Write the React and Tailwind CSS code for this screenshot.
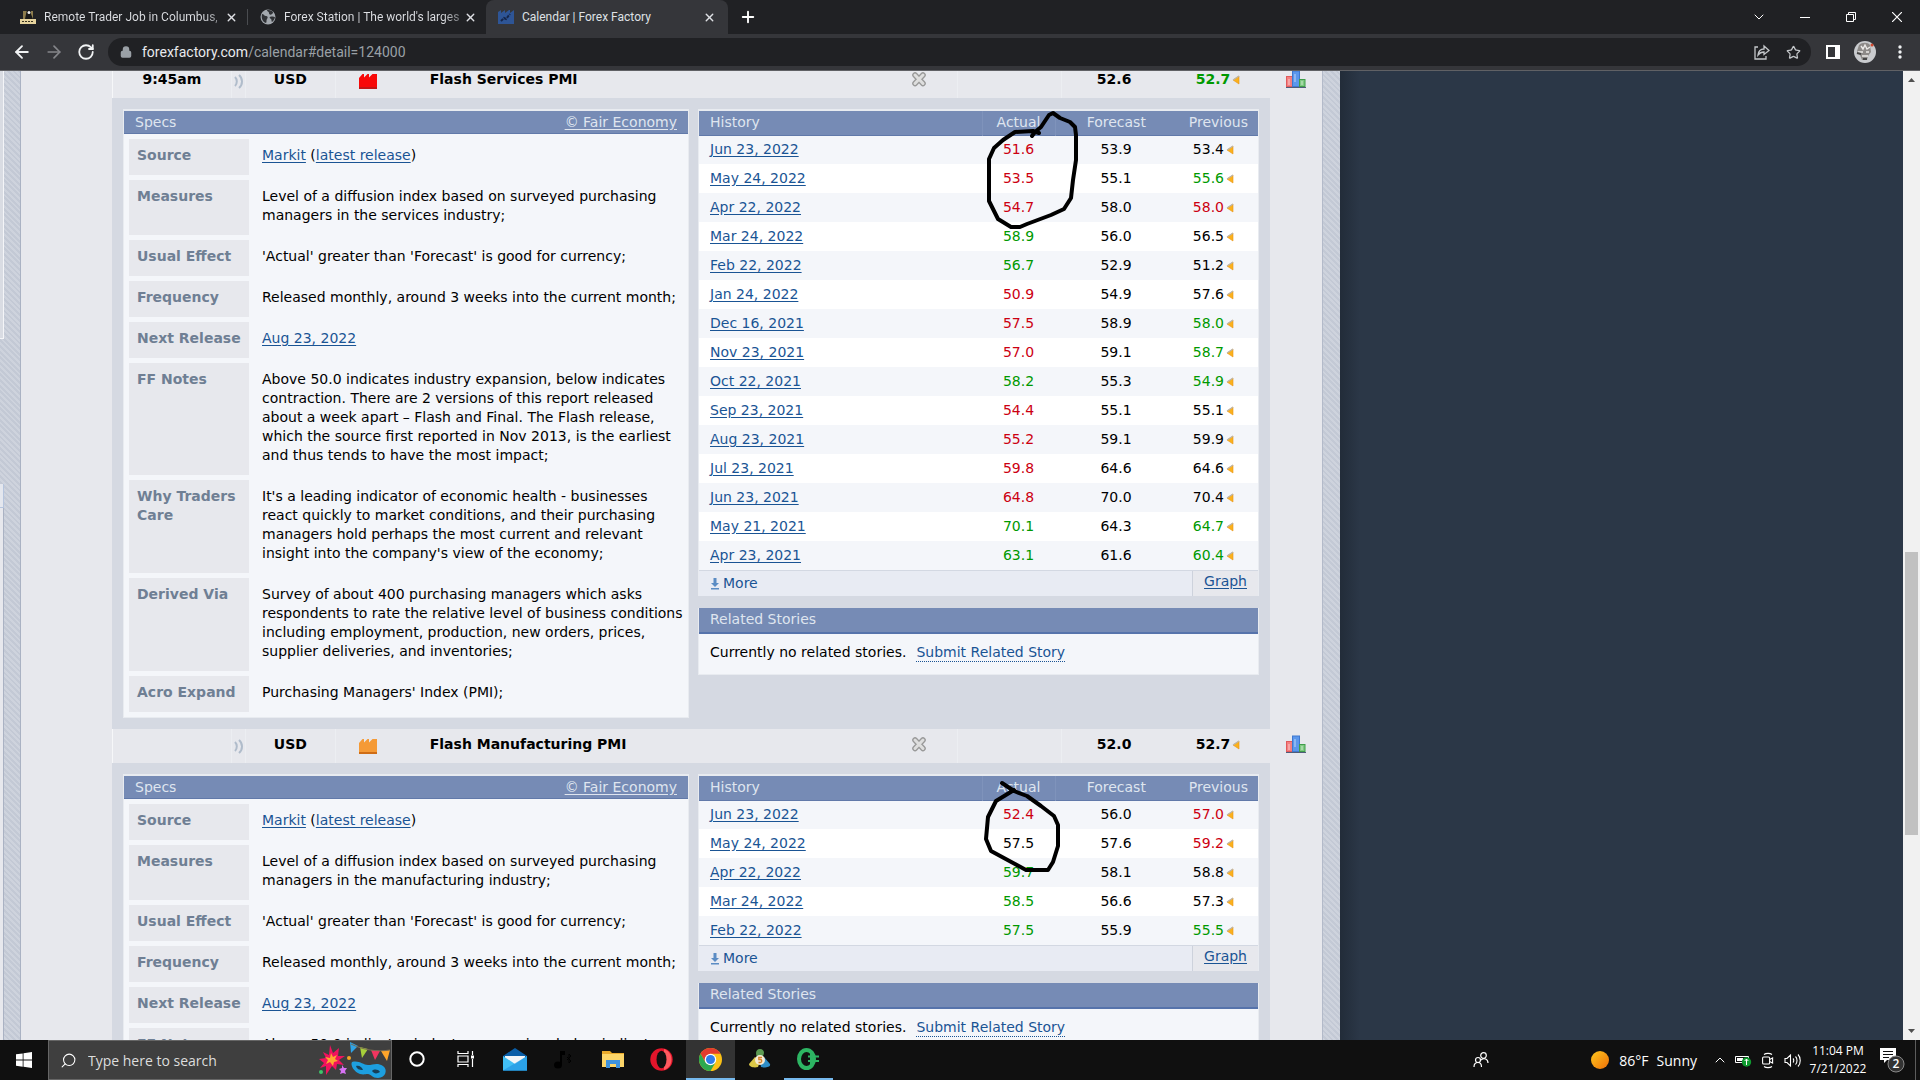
import { X, Plus, ArrowLeft, ArrowRight, RotateCw, Lock, Star, ChevronDown, ChevronUp, Search } from "lucide-react";

const specsFor = (sector) => [
  { label: "Source", source: true },
  { label: "Measures", text: `Level of a diffusion index based on surveyed purchasing managers in the ${sector} industry;` },
  { label: "Usual Effect", text: "'Actual' greater than 'Forecast' is good for currency;" },
  { label: "Frequency", text: "Released monthly, around 3 weeks into the current month;" },
  { label: "Next Release", link: "Aug 23, 2022" },
  {
    label: "FF Notes",
    text: "Above 50.0 indicates industry expansion, below indicates contraction. There are 2 versions of this report released about a week apart – Flash and Final. The Flash release, which the source first reported in Nov 2013, is the earliest and thus tends to have the most impact;",
  },
  {
    label: "Why Traders Care",
    text: "It's a leading indicator of economic health - businesses react quickly to market conditions, and their purchasing managers hold perhaps the most current and relevant insight into the company's view of the economy;",
  },
  {
    label: "Derived Via",
    text: "Survey of about 400 purchasing managers which asks respondents to rate the relative level of business conditions including employment, production, new orders, prices, supplier deliveries, and inventories;",
  },
  { label: "Acro Expand", text: "Purchasing Managers' Index (PMI);" },
];

// date, actual, actual tone, forecast, previous, previous tone
const servicesHistory = [
  ["Jun 23, 2022", "51.6", "red", "53.9", "53.4", ""],
  ["May 24, 2022", "53.5", "red", "55.1", "55.6", "green"],
  ["Apr 22, 2022", "54.7", "red", "58.0", "58.0", "red"],
  ["Mar 24, 2022", "58.9", "green", "56.0", "56.5", ""],
  ["Feb 22, 2022", "56.7", "green", "52.9", "51.2", ""],
  ["Jan 24, 2022", "50.9", "red", "54.9", "57.6", ""],
  ["Dec 16, 2021", "57.5", "red", "58.9", "58.0", "green"],
  ["Nov 23, 2021", "57.0", "red", "59.1", "58.7", "green"],
  ["Oct 22, 2021", "58.2", "green", "55.3", "54.9", "green"],
  ["Sep 23, 2021", "54.4", "red", "55.1", "55.1", ""],
  ["Aug 23, 2021", "55.2", "red", "59.1", "59.9", ""],
  ["Jul 23, 2021", "59.8", "red", "64.6", "64.6", ""],
  ["Jun 23, 2021", "64.8", "red", "70.0", "70.4", ""],
  ["May 21, 2021", "70.1", "green", "64.3", "64.7", "green"],
  ["Apr 23, 2021", "63.1", "green", "61.6", "60.4", "green"],
];

const manufacturingHistory = [
  ["Jun 23, 2022", "52.4", "red", "56.0", "57.0", "red"],
  ["May 24, 2022", "57.5", "", "57.6", "59.2", "red"],
  ["Apr 22, 2022", "59.7", "green", "58.1", "58.8", ""],
  ["Mar 24, 2022", "58.5", "green", "56.6", "57.3", ""],
  ["Feb 22, 2022", "57.5", "green", "55.9", "55.5", "green"],
];

const tones = {
  red: "text-[#cc0011]",
  green: "text-[#009900]",
  "": "text-black",
};

const stripes = "bg-[repeating-linear-gradient(45deg,#c3c9d5_0px,#c3c9d5_2px,#ced3dd_2px,#ced3dd_4px)]";
const link = "text-[#1a5494] underline underline-offset-2";

/* ---------- small icons ---------- */

function RevisedIcon() {
  return (
    <svg width="8" height="10" viewBox="0 0 8 10" className="ml-[2px] inline-block align-[-1px]">
      <path d="M7 1v8L1 5z" fill="#fbb11c" stroke="#e8941a" strokeWidth="0.6" />
      <path d="M1 5l6-4" stroke="#bcb6ad" strokeWidth="1.2" />
    </svg>
  );
}

function SoundIcon() {
  return (
    <svg width="11" height="15" viewBox="0 0 11 15" fill="none" stroke="#b0bccb" strokeWidth="2">
      <path d="M2 3c2.400 2.500 2.400 6.500 0 9M6 1c4 3.500 4 9.500 0 13" />
    </svg>
  );
}

function ImpactIcon({ color, edge }) {
  return (
    <svg width="18" height="16" viewBox="0 0 18 16">
      <path d="M0 15V5l3.500-4H5v3.500L8.500 1H10v3.500L13.500 1H18v14z" fill={color} />
      <path d="M0 14h18v2H0z" fill={edge} />
    </svg>
  );
}

function DetailCloseIcon() {
  return (
    <svg width="16" height="16" viewBox="0 0 16 16" strokeLinecap="round">
      <path d="M4 4l8 8.500M12 4l-8 8.500" stroke="#999" strokeWidth="5.600" />
      <path d="M4 4l8 8.500M12 4l-8 8.500" stroke="#dedede" strokeWidth="3" />
    </svg>
  );
}

function BarsIcon() {
  return (
    <svg width="20" height="18" viewBox="0 0 20 18">
      <rect x="0.500" y="6.500" width="6" height="10" fill="#f47f80" stroke="#e05a5c" />
      <rect x="6.500" y="1" width="7" height="15.500" fill="#5b97ec" stroke="#3f78cf" />
      <rect x="13.500" y="9.500" width="5.500" height="7" fill="#7fc982" stroke="#3f9d4a" />
      <path d="M3 9v6M9 4v8M16 11v4" stroke="#fff" strokeOpacity=".3" strokeWidth="2" />
      <path d="M0 17.500h20" stroke="#4f5c7a" />
    </svg>
  );
}

function MoreIcon() {
  return (
    <svg width="10" height="12" viewBox="0 0 10 12" fill="#5b8cc4">
      <path d="M3.500 0h3v5H9L5 9 1 5h2.500zM1 10h8v1.500H1z" />
    </svg>
  );
}

/* ---------- browser chrome ---------- */

function TabStrip() {
  return (
    <div className="flex h-[34px] shrink-0 items-center bg-[#202124] text-[12px] text-[#dfe1e5]">
      <div className="flex h-4 w-[248px] items-center border-r border-[#4a4c50] pl-5 pr-[9px]">
        <svg width="16" height="16" viewBox="0 0 16 16" className="mr-2 shrink-0">
          <path d="M3 2h10v8H3z" fill="#8d7c4c" />
          <path d="M7 1h4v4l2 5H5l1-5z" fill="#191919" />
          <circle cx="9" cy="3.500" r="1.500" fill="#eee" />
          <path d="M0 10h16v5H0z" fill="#e6d39d" />
          <path d="M2 12.500h12" stroke="#3b3420" strokeDasharray="2 1" />
        </svg>
        <span className="flex-1 whitespace-nowrap bg-[linear-gradient(90deg,#dfe1e5_90%,#707276)] bg-clip-text text-transparent">
          Remote Trader Job in Columbus,
        </span>
        <button aria-label="Close tab" className="ml-1"><X size={13} strokeWidth={2.500} /></button>
      </div>
      <div className="flex h-4 w-[238px] items-center pl-3 pr-[9px]">
        <svg width="16" height="16" viewBox="0 0 16 16" className="mr-2 shrink-0">
          <circle cx="8" cy="8" r="7.500" fill="#a3a8ae" />
          <path d="M2 5c2 0 2 2 4 2s2 2 1 3 0 3-1 4C3 13 1 10 2 5zM7 1c0 2 2 1 2 3s2 2 3 1 1-1 1-2c-2-2-4-2-6-2zM10 8c2-1 4 0 5 0-.5 3-2 4-3 5-1-1 0-2-1-3s-2-1-1-2z" fill="#303236" />
        </svg>
        <span className="flex-1 whitespace-nowrap bg-[linear-gradient(90deg,#dfe1e5_90%,#707276)] bg-clip-text text-transparent">
          Forex Station | The world's larges
        </span>
        <button aria-label="Close tab" className="ml-1"><X size={13} strokeWidth={2.500} /></button>
      </div>
      <div className="flex h-full w-[242px] items-center rounded-t-lg bg-[#35363a] pl-3 pr-3">
        <svg width="16" height="16" viewBox="0 0 16 16" className="mr-2 shrink-0">
          <path d="M0 15V3l3-2v3l4-3v3l4-3h1v3l4-3v14z" fill="#2e5596" />
          <path d="M3 12l3-3 2 1 4-5" stroke="#15264a" strokeWidth="2" fill="none" strokeDasharray="3 1" />
        </svg>
        <span className="flex-1 whitespace-nowrap">Calendar | Forex Factory</span>
        <button aria-label="Close tab"><X size={13} strokeWidth={2.500} /></button>
      </div>
      <button aria-label="New tab" className="ml-[11px] text-white"><Plus size={18} strokeWidth={2.500} /></button>
      <div className="ml-auto flex h-7 items-center text-white">
        <button aria-label="Search tabs" className="flex w-[46px] justify-center"><ChevronDown size={16} strokeWidth={1.500} /></button>
        <button aria-label="Minimize" className="flex w-[46px] justify-center">
          <svg width="10" height="10" viewBox="0 0 10 10"><path d="M0 5.500h10" stroke="#fff" /></svg>
        </button>
        <button aria-label="Restore" className="flex w-[46px] justify-center">
          <svg width="10" height="10" viewBox="0 0 10 10" fill="none" stroke="#fff"><path d="M.5 2.500h7v7h-7zM2.500 2.500v-2h7v7h-2" /></svg>
        </button>
        <button aria-label="Close window" className="flex w-[46px] justify-center">
          <svg width="10" height="10" viewBox="0 0 10 10" stroke="#fff" strokeWidth="1.200"><path d="M0 0l10 10M10 0L0 10" /></svg>
        </button>
      </div>
    </div>
  );
}

function Toolbar() {
  return (
    <div className="flex h-[37px] shrink-0 items-center border-b border-[#606165] bg-[#35363a] pl-3 pr-[10px] text-[#f1f3f4]">
      <button aria-label="Back"><ArrowLeft size={20} strokeWidth={2.200} /></button>
      <button aria-label="Forward" className="ml-3 text-[#85868a]"><ArrowRight size={20} strokeWidth={2} /></button>
      <button aria-label="Reload" className="ml-[13px]"><RotateCw size={18} strokeWidth={2.400} /></button>
      <div className="ml-[13px] flex h-7 flex-1 items-center rounded-full bg-[#202124] pl-3 pr-[10px] text-[14px]">
        <Lock size={12} strokeWidth={3} className="mr-[10px] shrink-0 text-[#9aa0a6]" fill="#9aa0a6" />
        <a href="#detail=124000" className="flex-1 text-[#9aa0a6]">
          <span className="text-[#e8eaed]">forexfactory.com</span>/calendar#detail=124000
        </a>
        <button aria-label="Share" className="mr-4">
          <svg width="16" height="16" viewBox="0 0 16 16" fill="none" stroke="#c4c7ca" strokeWidth="1.300">
            <path d="M4 3H1v12h11v-3" />
            <path d="M4 11c.5-4 3-6 6-6V2l5 4.500-5 4V8c-3 0-4.500 1-6 3z" />
          </svg>
        </button>
        <button aria-label="Bookmark"><Star size={15} strokeWidth={2} className="text-[#c4c7ca]" /></button>
      </div>
      <button aria-label="Side panel" className="ml-[15px]">
        <svg width="14" height="14" viewBox="0 0 14 14"><path d="M1 1h12v12H1z" fill="none" stroke="#fff" strokeWidth="2" /><path d="M9 1h4v12H9z" fill="#fff" /></svg>
      </button>
      <button aria-label="Profile" className="ml-[14px]">
        <svg width="22" height="22" viewBox="0 0 22 22">
          <circle cx="11" cy="11" r="11" fill="#c9cbce" />
          <path d="M5 4c3-3 9-3 11 0l1 7-3 4-1 4H8l-2-5-3-4z" fill="#8d8a88" />
          <path d="M7 5l2 3 2-4 2 4 3-2M4 11h5M12 11h3M8 15h6" stroke="#eceae8" strokeWidth="1.400" fill="none" />
          <path d="M3 12l4 1M9 18h4" stroke="#444" strokeWidth="2" />
          <circle cx="18" cy="4" r="1.500" fill="#d2482e" />
        </svg>
      </button>
      <button aria-label="Menu" className="ml-[14px] flex w-5 justify-center">
        <svg width="4" height="14" viewBox="0 0 4 14" fill="#f1f3f4"><circle cx="2" cy="2" r="1.700" /><circle cx="2" cy="7" r="1.700" /><circle cx="2" cy="12" r="1.700" /></svg>
      </button>
    </div>
  );
}

/* ---------- calendar ---------- */

function EventRow({ time, name, color, edge, forecast, previous, previousTone }) {
  return (
    <div className="flex h-[34px] bg-[#e7e8ed] font-bold leading-[31px]">
      <div className="grid flex-1 grid-cols-[118fr_15fr_90fr_64fr_481fr_78fr_104fr_104fr_104fr] border-l border-[#f6f7f9] text-center">
        <div>{time}</div>
        <div className="flex items-center justify-center border-x border-[#eceef2]"><SoundIcon /></div>
        <div className="border-r border-[#eceef2]">USD</div>
        <div className="flex items-center justify-center"><ImpactIcon color={color} edge={edge} /></div>
        <div className="pl-[30px] text-left">{name}</div>
        <div className="flex justify-center border-r border-[#eceef2] pt-[7px]">
          <button aria-label="Close detail" className="h-4"><DetailCloseIcon /></button>
        </div>
        <div className="border-r border-[#eceef2]" />
        <div>{forecast}</div>
        <div className={tones[previousTone]}>
          {previous}
          <RevisedIcon />
        </div>
      </div>
      <div className="flex w-[52px] justify-center pt-[6px]">
        <button aria-label="Graph" className="h-[18px]"><BarsIcon /></button>
      </div>
    </div>
  );
}

function Specs({ sector }) {
  return (
    <section className="border border-t-2 border-[#e8ebf0] bg-[#f4f6fa]">
      <div className="flex h-[23px] items-center justify-between border-b border-[#6179a9] bg-[#768bb5] px-[11px] text-[#dfe5ef]">
        <h3>Specs</h3>
        <a href="#fair-economy" className="underline underline-offset-2">© Fair Economy</a>
      </div>
      <table className="w-full border-separate border-spacing-x-[5px] border-spacing-y-[5px] text-left align-top">
        <tbody>
          {specsFor(sector).map((row) => (
            <tr key={row.label} className="align-top leading-[19px]">
              <th className="w-[120px] bg-[#e7e8ed] pb-[10px] pl-2 pt-[7px] text-[#6f7f94]">{row.label}</th>
              <td className="pb-[10px] pl-2 pt-[7px]">
                {row.source && (
                  <>
                    <a href="#markit" className={link}>Markit</a> (<a href="#latest" className={link}>latest release</a>)
                  </>
                )}
                {row.link && <a href="#next" className={link}>{row.link}</a>}
                {row.text}
              </td>
            </tr>
          ))}
        </tbody>
      </table>
    </section>
  );
}

function History({ rows }) {
  return (
    <section className="border-x border-t-2 border-[#e8ebf0] bg-[#f4f6fa]">
      <table className="w-full table-fixed">
        <thead>
          <tr className="h-6 border-b border-[#6179a9] bg-[#768bb5] text-[#dfe5ef]">
            <th className="pl-[11px] text-left font-normal">History</th>
            <th className="w-[73px] border-x border-[#7f93bb] font-normal">Actual</th>
            <th className="w-[122px] font-normal">Forecast</th>
            <th className="w-[81px] pr-[10px] text-right font-normal">Previous</th>
          </tr>
        </thead>
        <tbody>
          {rows.map(([date, actual, actualTone, forecast, previous, previousTone]) => (
            <tr key={date} className="h-[29px] odd:bg-[#f4f6fa] even:bg-white">
              <td className="pl-[11px]"><a href="#history" className={link}>{date}</a></td>
              <td className={`text-center ${tones[actualTone]}`}>{actual}</td>
              <td className="text-center">{forecast}</td>
              <td className={`whitespace-nowrap pr-6 text-right ${tones[previousTone]}`}>
                {previous}
                <RevisedIcon />
              </td>
            </tr>
          ))}
        </tbody>
      </table>
      <div className="flex h-[26px] items-stretch justify-between border-t border-[#d3d8e2] bg-[#e8ebf3] text-[#1a5494]">
        <button className="flex items-center gap-[3px] pl-[11px]">
          <MoreIcon />
          More
        </button>
        <a href="#graph" className="border-l border-[#cdd2dc] bg-[#e7e8ed] px-[11px] pt-[1px] underline underline-offset-2">Graph</a>
      </div>
    </section>
  );
}

function RelatedStories() {
  return (
    <section className="mt-3 border-x border-b border-[#e8ebf0] bg-[#f4f6fa]">
      <h3 className="h-[26px] border-b-2 border-[#5673ab] bg-[#768bb5] pl-[11px] leading-[22px] text-[#dfe5ef]">Related Stories</h3>
      <p className="flex h-10 gap-[10px] pl-[11px] pt-[9px]">
        <span>Currently no related stories.</span>
        <a href="#submit" className="h-[19px] border-b border-dotted border-[#1a5494] text-[#1a5494]">Submit Related Story</a>
      </p>
    </section>
  );
}

function EventDetail({ sector, rows, children }) {
  return (
    <div className="mr-[52px] grid grid-cols-[566fr_561fr] items-start gap-x-[9px] bg-[#d5d9e2] px-[11px] pb-[11px] pt-[11px]">
      <Specs sector={sector} />
      <div className="relative">
        <History rows={rows} />
        <RelatedStories />
        {children}
      </div>
    </div>
  );
}

// freehand pen marks, drawn over the history tables
function PenMark({ d }) {
  return (
    <svg width="110" height="125" viewBox="0 0 110 125" className="pointer-events-none absolute right-[175px] top-0 overflow-visible" fill="none" stroke="#000" strokeWidth="4" strokeLinecap="round" strokeLinejoin="round">
      <path d={d} />
    </svg>
  );
}

function Calendar() {
  return (
    <div className="-mt-[7px] flex-1 pl-[91px]">
      <EventRow time="9:45am" name="Flash Services PMI" color="#f80808" edge="#c31515" forecast="52.6" previous="52.7" previousTone="green" />
      <EventDetail sector="services" rows={servicesHistory}>
        <PenMark d="M58 27l3-4 6-5 8-12 4-2 7 5 10 4 5 5 1 8v25l-3 20-2 18-7 11-13 6-24 9-7 3h-9l-13-8-9-18V50l5-11 9-8 12-8 18-1 6 2" />
      </EventDetail>
      <EventRow name="Flash Manufacturing PMI" color="#f59a36" edge="#cf6d16" forecast="52.0" previous="52.7" previousTone="" />
      <EventDetail sector="manufacturing" rows={manufacturingHistory}>
        <PenMark d="M28 9l12 8 13 5 14 10 13 10 4 9v21l-5 16-5 8H52l-11-6-24-13-5-12 2-22 8-16 18-11" />
      </EventDetail>
    </div>
  );
}

function Page() {
  return (
    <main className="flex min-h-0 flex-1 overflow-hidden bg-[#2b3747] text-[14px] leading-[19px] text-black [font-family:Verdana,'DejaVu_Sans',sans-serif]">
      <div className="grid flex-1 grid-cols-[1340fr_563fr] overflow-hidden">
        <div className="flex">
          <div className={`flex w-[21px] shrink-0 flex-col border-r border-[#aab2c3] ${stripes}`}>
            <div className="h-[268px] w-1 border-b border-r border-[#f4f5f8] bg-[#d9dce3]" />
            <div className="mt-[145px] h-6 w-1 border-b border-r border-[#b5c4dd] bg-[#e4e7ee]" />
            <div className="w-1 flex-1 border-r border-[#aab2c3] bg-[#e7e8ed]" />
          </div>
          <div className="flex flex-1 bg-[#e7e8ed]">
            <Calendar />
          </div>
          <div className={`w-[18px] shrink-0 border-l border-[#b3bac9] ${stripes}`} />
        </div>
        <div className="bg-[linear-gradient(90deg,#222c39_0px,#2b3747_20px)]" />
      </div>
      <div className="flex w-[17px] shrink-0 flex-col bg-[#f1f1f1]">
        <svg width="17" height="17" viewBox="0 0 17 17"><path d="M5 11h7L8.500 7z" fill="#505050" /></svg>
        <div className="flex-[464]" />
        <div className="mx-[2px] flex-[283] bg-[#c1c1c1]" />
        <div className="flex-[188]" />
        <svg width="17" height="17" viewBox="0 0 17 17"><path d="M5 6h7l-3.500 4z" fill="#505050" /></svg>
      </div>
    </main>
  );
}

/* ---------- taskbar ---------- */

function TaskButton({ label, active, running, children }) {
  return (
    <button
      aria-label={label}
      className={`flex h-full w-[49px] items-center justify-center border-b-2 ${active ? "bg-[#333333]" : ""} ${active || running ? "border-[#76b9ed]" : "border-transparent"}`}
    >
      {children}
    </button>
  );
}

function PartyArt() {
  return (
    <svg width="73" height="38" viewBox="0 0 73 38" className="shrink-0">
      <path d="M12 4l3 8 6-5-1 8 7 0-6 4 5 5-7-1-1 6-4-4-6 9 0-9-6 2 4-5-5-4 7-1-3-6 6 3z" fill="#f0125e" />
      <path d="M13 12l2 4 4-2-2 4 3 2-4 1-1 4-3-4-4 2 2-4-3-3 5 1z" fill="#ffa630" />
      <path d="M32 1l8 4-7 7z" fill="#2fa4e7" />
      <path d="M42 6l8 2-6 9z" fill="#a7cf3a" />
      <path d="M53 9l9 1-5 9z" fill="#f2355f" />
      <path d="M63 10l9-1-3 11z" fill="#ffa52a" />
      <path d="M33 3c12 6 26 8 39 6" stroke="#7a6c53" fill="none" />
      <circle cx="31" cy="17" r="2" fill="#f5a623" />
      <circle cx="3" cy="31" r="2" fill="#3fc56b" />
      <path d="M24 24l2 3 3 0-2 3 1 3-3-1-3 1 1-3-2-2 3-1z" fill="#d873f5" />
      <path d="M34 21c7-2 11 3 16 3s9-3 15 1c5 3 3 12-5 12-6 0-7-4-10-4s-4 1-8 0c-6-2-10-9-8-12z" fill="#1d9fdf" />
      <path d="M38 25c3-1 6 1 7 4-4 0-6-1-7-4zM54 30c2-2 6-2 8 1-3 2-6 2-8-1z" fill="#173f57" />
    </svg>
  );
}

function Taskbar() {
  return (
    <footer className="flex h-10 shrink-0 items-center bg-[#101010] text-white">
      <button aria-label="Start" className="flex h-full w-12 items-center justify-center">
        <svg width="16" height="16" viewBox="0 0 16 16" fill="#fff"><path d="M0 2.300L6.700 1.400v6.200H0zM7.500 1.300L16 0v7.600H7.500zM0 8.400h6.700v6.300L0 13.700zM7.500 8.400H16V16l-8.500-1.200z" /></svg>
      </button>
      <div className="flex h-full w-[344px] items-center border border-[#666] bg-[#3f3f3f] pl-[11px]">
        <Search size={17} strokeWidth={1.500} className="shrink-0 -scale-x-100" />
        <input aria-label="Search" placeholder="Type here to search" className="ml-[11px] min-w-0 flex-1 bg-transparent text-[14px] outline-none placeholder:text-[#dddddd]" />
        <PartyArt />
      </div>
      <TaskButton label="Cortana">
        <svg width="16" height="16" viewBox="0 0 16 16"><circle cx="8" cy="8" r="6.700" fill="none" stroke="#fff" strokeWidth="2" /></svg>
      </TaskButton>
      <TaskButton label="Task View">
        <svg width="18" height="16" viewBox="0 0 18 16" fill="none" stroke="#fff" strokeWidth="1.200"><path d="M1 0v2.500h10V0M1 16v-2.500h10V16M1 5h10v6H1zM15.500 0v4M15.500 8v8" /><path d="M14 4.500h3v3h-3z" fill="#fff" stroke="none" /></svg>
      </TaskButton>
      <TaskButton label="Mail">
        <svg width="24" height="23" viewBox="0 0 24 23"><path d="M0 8l12-8 12 8v14.500H0z" fill="#0a5ea8" /><path d="M2 8h20v8H2z" fill="#f2f5f8" /><path d="M0 8l12 8 12-8v14.500H0z" fill="#41bff5" /><path d="M0 22.500L24 8v14.500z" fill="#1c8fe0" fillOpacity=".6" /></svg>
      </TaskButton>
      <TaskButton label="Music">
        <svg width="19" height="19" viewBox="0 0 19 19"><ellipse cx="4" cy="15" rx="4" ry="3.500" /><path d="M6 1h5v4H8v10H6z" /><path d="M13 7l4 4-2 2V4l2 2-4 4" stroke="#000" fill="none" /></svg>
      </TaskButton>
      <TaskButton label="File Explorer">
        <svg width="22" height="19" viewBox="0 0 22 19"><path d="M0 1h8l2 2h12v5H0z" fill="#e9a92b" /><path d="M0 4h22v13H0z" fill="#fcd569" /><path d="M4 10h14v8h-4v-4H8v4H4z" fill="#3f92dc" /></svg>
      </TaskButton>
      <TaskButton label="Opera">
        <svg width="23" height="23" viewBox="0 0 23 23"><circle cx="11.500" cy="11.500" r="11.200" fill="#e3152b" /><path d="M14 1c10 3 10 18 0 21z" fill="#ff5a5f" /><ellipse cx="11.500" cy="11.500" rx="5" ry="8.700" fill="#101010" /></svg>
      </TaskButton>
      <TaskButton label="Chrome" active>
        <svg width="23" height="23" viewBox="0 0 24 24"><circle cx="12" cy="12" r="12" fill="#fbc116" /><path d="M12 6h10.400a12 12 0 0 0-20.800 0l5.200 9z" fill="#e33b2e" /><path d="M1.600 6a12 12 0 0 0 10.400 18l5.200-9L12 12 6.800 15z" fill="#2da94f" /><circle cx="12" cy="12" r="6" fill="#fff" /><circle cx="12" cy="12" r="4.700" fill="#2f7de9" /></svg>
      </TaskButton>
      <TaskButton label="MetaTrader">
        <svg width="22" height="20" viewBox="0 0 22 20"><path d="M11 0c4 0 5 4 3 7l-6 1C6 4 7 0 11 0z" fill="#5c9a52" /><path d="M6 8L0 15c0 3 5 4 9 3l2-6z" fill="#dcc847" /><path d="M15 8l6 7c1 3-5 4-9 3l-1-6z" fill="#2f8dc6" /><circle cx="11" cy="11" r="5" fill="#f4ead5" /><path d="M13 8.500H9.800v2h1.500c2 0 2 3 0 3H9.500" stroke="#d98228" strokeWidth="1.300" fill="none" /></svg>
      </TaskButton>
      <TaskButton label="Trading terminal" running>
        <svg width="23" height="22" viewBox="0 0 23 22"><ellipse cx="9.500" cy="11" rx="7.500" ry="9" fill="none" stroke="#2db563" strokeWidth="4" /><path d="M11 8.500h11M11 13h11M14 4v13" stroke="#2db563" strokeWidth="2" /></svg>
      </TaskButton>

      <div className="ml-auto flex h-full items-center">
        <button aria-label="People" className="mr-[102px]">
          <svg width="16" height="16" viewBox="0 0 16 16" fill="none" stroke="#fff" strokeWidth="1.200"><circle cx="10.500" cy="3.500" r="2.800" /><circle cx="5" cy="8" r="2.500" /><path d="M1 15c0-3 1.500-4.500 4-4.500S8.500 12 8.500 15M8 8c3-2.500 7-1 7 3" /></svg>
        </button>
        <button className="flex items-center text-[14px]">
          <svg width="18" height="18" viewBox="0 0 18 18">
            <defs><linearGradient id="sun" x1="0" y1="0" x2="1" y2="1"><stop offset="0" stopColor="#ffc81e" /><stop offset="1" stopColor="#ee6f08" /></linearGradient></defs>
            <circle cx="9" cy="9" r="9" fill="url(#sun)" />
          </svg>
          <span className="ml-[10px] mr-2">86°F</span>
          <span>Sunny</span>
        </button>
        <button aria-label="Show hidden icons" className="ml-[15px]"><ChevronUp size={16} strokeWidth={1.500} /></button>
        <button aria-label="Battery" className="ml-[7px]">
          <svg width="17" height="14" viewBox="0 0 17 14"><path d="M.5 3.500h13v6H.5z" fill="none" stroke="#fff" /><path d="M2 5h6v3H2z" fill="#fff" /><circle cx="11.500" cy="9" r="4.700" fill="#0f9b2f" /><path d="M11.500 6v6M9.700 8l1.800-2 1.800 2" stroke="#fff" fill="none" /></svg>
        </button>
        <button aria-label="Meet Now" className="ml-[10px]">
          <svg width="12" height="17" viewBox="0 0 12 17" fill="none" stroke="#fff" strokeWidth="1.100"><rect x="0.600" y="5" width="7" height="7" rx="1" /><path d="M7.600 7.500l3-1.500v5l-3-1.500M2 2.500c2-1.500 6-1.500 8 0M2 14.500c2 1.500 6 1.500 8 0" /></svg>
        </button>
        <button aria-label="Volume" className="ml-[10px]">
          <svg width="17" height="15" viewBox="0 0 17 15" fill="none" stroke="#fff" strokeWidth="1.100"><path d="M1 5.500h2L6.500 2v11L3 9.500H1zM9 5.500c1 1 1 3 0 4M11.500 3.500c2 2 2 6 0 8M14 1.500c3 3 3 9 0 12" /></svg>
        </button>
        <button className="ml-2 w-[58px] whitespace-nowrap text-center text-[12px] leading-[18px]">
          11:04 PM
          <br />
          7/21/2022
        </button>
        <button aria-label="Notifications" className="ml-3 mr-[10px]">
          <svg width="26" height="26" viewBox="0 0 26 26">
            <path d="M1 1h16v12h-9l-3 3v-3H1z" fill="#fff" />
            <path d="M4 4.500h10M4 7.500h10M4 10.500h6" stroke="#101010" />
            <circle cx="17" cy="17" r="8" fill="#333" stroke="#8a8a8a" />
            <text x="17" y="21" textAnchor="middle" fontSize="12" fontWeight="600" fill="#fff">2</text>
          </svg>
        </button>
        <div className="mr-1 h-full w-px bg-[#5c5c5c]" />
      </div>
    </footer>
  );
}

export default function App() {
  return (
    <div className="flex h-screen flex-col overflow-hidden [font-family:'Segoe_UI','Open_Sans',sans-serif]">
      <div className="[font-family:Roboto,sans-serif]">
        <TabStrip />
        <Toolbar />
      </div>
      <Page />
      <Taskbar />
    </div>
  );
}
